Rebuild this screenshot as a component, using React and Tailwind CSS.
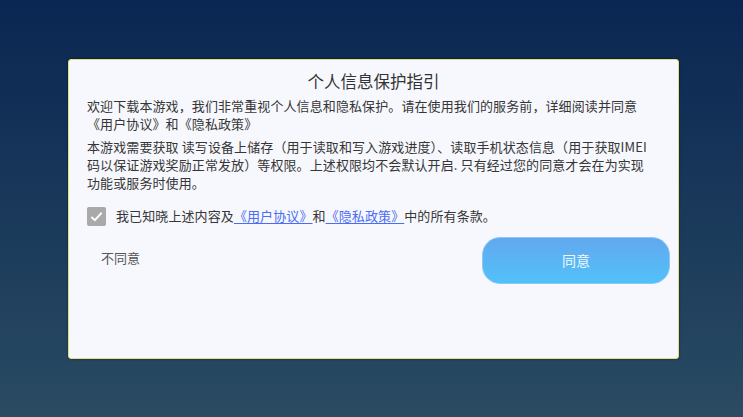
import React, { useState } from "react";

const font = { fontFamily: '"Noto Sans CJK SC", "Noto Sans", sans-serif' };

export default function App() {
  const [checked, setChecked] = useState(true);

  return (
    <div
      style={font}
      className="w-[743px] h-[417px] flex items-center justify-center pl-[4px] bg-gradient-to-b from-[#0a2652] to-[#2a4b62]"
    >
      <div className="w-[611px] h-[300px] bg-[#f7f8fd] border border-[#dfe07a] rounded-[3px] shadow-[0_0_2px_rgba(0,0,0,0.6)] flex flex-col pt-[10px]">
        <h1 className="h-[22px] leading-[22px] text-[16.5px] text-[#333] text-center">
          个人信息保护指引
        </h1>

        <div className="px-[18px] text-[13px] leading-[18px] tracking-[0.1px] text-[#363636]">
          <p className="mt-[5px] whitespace-nowrap">
            欢迎下载本游戏，我们非常重视个人信息和隐私保护。请在使用我们的服务前，详细阅读并同意
            <br />
            《用户协议》和《隐私政策》
          </p>
          <p className="mt-[5px] whitespace-nowrap">
            本游戏需要获取 读写设备上储存（用于读取和写入游戏进度）、读取手机状态信息（用于获取IMEI
            <br />
            码以保证游戏奖励正常发放）等权限。上述权限均不会默认开启. 只有经过您的同意才会在为实现
            <br />
            功能或服务时使用。
          </p>

          <label className="mt-[15px] flex items-center h-[19px] cursor-pointer">
            <button
              type="button"
              onClick={() => setChecked(!checked)}
              className="w-[19px] h-[19px] rounded-[2px] bg-[#a9a9a9] flex items-center justify-center shrink-0"
            >
              {checked && (
                <svg width="15" height="15" viewBox="0 0 16 16">
                  <path
                    d="M2.5 8.5 L6.3 12 L13.5 4"
                    fill="none"
                    stroke="#fff"
                    strokeWidth="2"
                  />
                </svg>
              )}
            </button>
            <span className="ml-[10px] text-[13px] text-[#363636] whitespace-nowrap">
              我已知晓上述内容及
              <a className="text-[#4b6cf5] underline underline-offset-2">《用户协议》</a>
              和
              <a className="text-[#4b6cf5] underline underline-offset-2">《隐私政策》</a>
              中的所有条款。
            </span>
          </label>
        </div>

        <div className="mt-[11px] flex justify-between pl-[32px] pr-[8px]">
          <button className="mt-[12px] self-start h-[17px] leading-[17px] text-[13px] text-[#555]">
            不同意
          </button>
          <button className="w-[188px] h-[47px] rounded-[18px] bg-gradient-to-b from-[#62a8ee] to-[#50c1f9] border border-[#8cc8f4] text-[14px] text-white/90">
            同意
          </button>
        </div>
      </div>
    </div>
  );
}
